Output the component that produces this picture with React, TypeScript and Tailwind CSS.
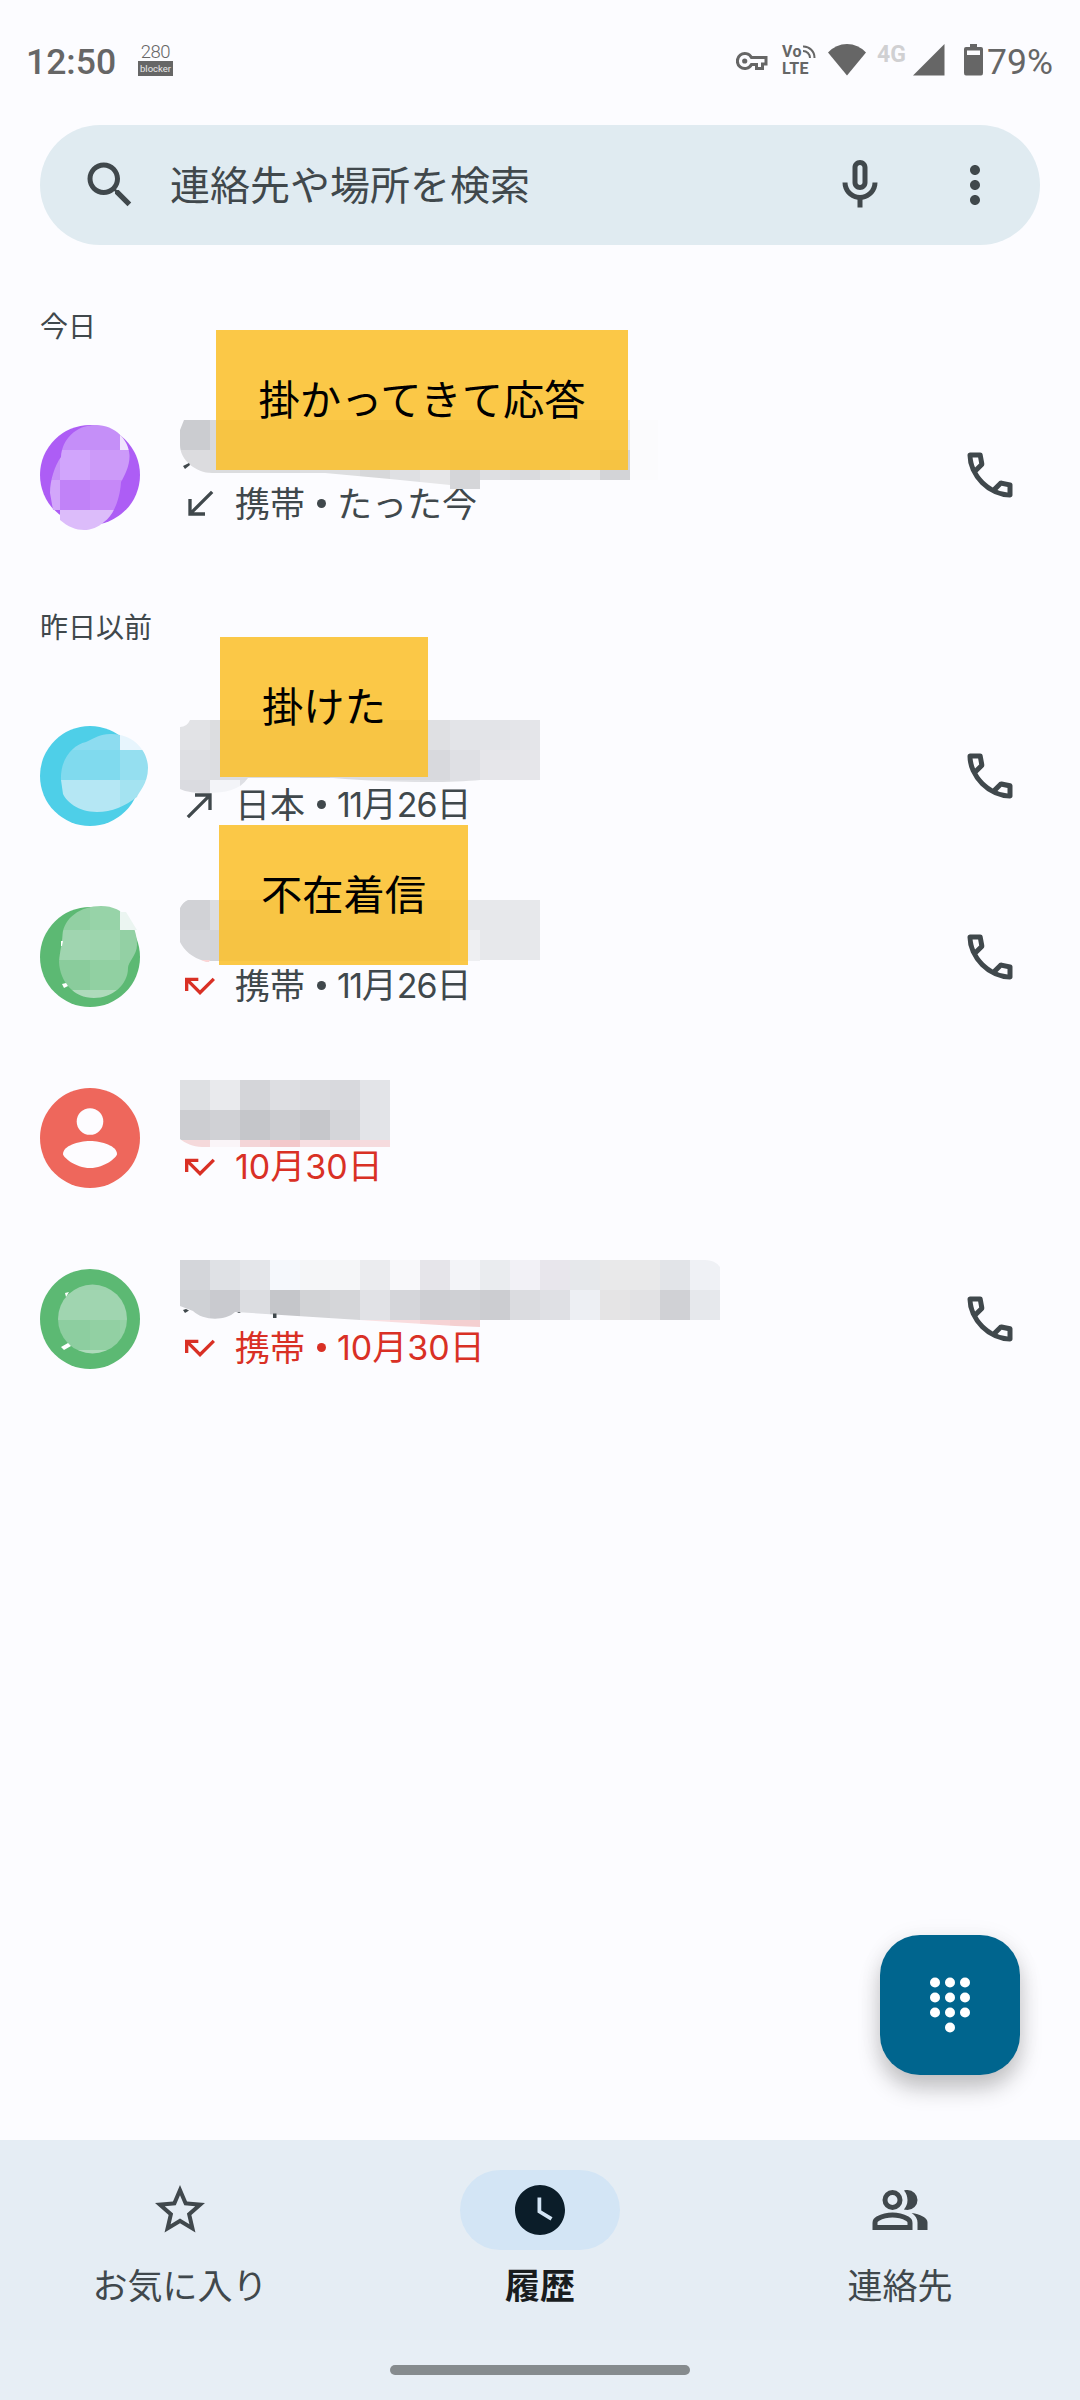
import { ReactNode } from 'react';

type CallType = 'received' | 'made' | 'missed';

interface Block {
  x: number;
  y: number;
  h?: number;
  w?: number;
  colors: string[];
}

interface Mosaic {
  clip: string;
  blocks: Block[];
}

interface Call {
  id: string;
  top: number;
  type: CallType;
  avatar: string;
  unknown?: boolean;
  place?: string;
  date: ReactNode;
  alert?: boolean;
  callable: boolean;
  mosaics: Mosaic[];
  marks?: { d: string; fill: string }[];
  note?: { text: string; box: string };
}

const callPaths: Record<CallType, string> = {
  received: 'M20 5.41L18.59 4 7 15.59V9H5v10h10v-2H8.41z',
  made: 'M9 5v2h6.59L4 18.59 5.41 20 17 8.41V15h2V5z',
  missed: 'M19.59 7L12 14.59 6.41 9H11V7H3v8h2v-4.59l7 7 9-9z',
};

const paths = {
  search:
    'M15.5 14h-.79l-.28-.27C15.41 12.59 16 11.11 16 9.5 16 5.91 13.09 3 9.5 3S3 5.91 3 9.5 5.91 16 9.5 16c1.61 0 3.09-.59 4.23-1.57l.27.28v.79l5 4.99L20.49 19l-4.99-5zm-6 0C7.01 14 5 11.99 5 9.5S7.01 5 9.5 5 14 7.01 14 9.5 11.99 14 9.5 14z',
  mic: 'M12 14c1.66 0 3-1.34 3-3V5c0-1.66-1.34-3-3-3S9 3.34 9 5v6c0 1.66 1.34 3 3 3zm-1-9c0-.55.45-1 1-1s1 .45 1 1v6c0 .55-.45 1-1 1s-1-.45-1-1V5zm6 6c0 2.76-2.24 5-5 5s-5-2.24-5-5H5c0 3.53 2.61 6.43 6 6.92V21h2v-3.08c3.39-.49 6-3.39 6-6.92h-2z',
  more: 'M12 8c1.1 0 2-.9 2-2s-.9-2-2-2-2 .9-2 2 .9 2 2 2zm0 2c-1.1 0-2 .9-2 2s.9 2 2 2 2-.9 2-2-.9-2-2-2zm0 6c-1.1 0-2 .9-2 2s.9 2 2 2 2-.9 2-2-.9-2-2-2z',
  phone:
    'M19.95 21q-3.125 0-6.175-1.362t-5.55-3.863-3.862-5.55T3 4.05q0-.45.3-.75t.75-.3H8.1q.35 0 .625.238t.325.562l.65 3.5q.05.4-.025.675T9.4 8.45L6.975 10.9q.5.925 1.187 1.787t1.513 1.663q.775.775 1.625 1.438T13.1 17l2.35-2.35q.225-.225.588-.338t.712-.062l3.45.7q.35.1.575.363T21 15.9v4.05q0 .45-.3.75t-.75.3M6.025 9l1.65-1.65L7.25 5H5.025q.125 1.025.35 2.025T6.025 9m8.95 8.95q.975.425 1.988.675T19 18.95v-2.2l-2.35-.475z',
  star: 'M22 9.24l-7.19-.62L12 2 9.19 8.63 2 9.24l5.46 4.73L5.82 21 12 17.27 18.18 21l-1.63-7.03L22 9.24zM12 15.4l-3.76 2.27 1-4.28-3.32-2.88 4.38-.38L12 6.1l1.71 4.04 4.38.38-3.32 2.88 1 4.28L12 15.4z',
  clock:
    'M12 2C6.5 2 2 6.5 2 12s4.5 10 10 10 10-4.5 10-10S17.5 2 12 2zm4.2 14.2L11 13V7h1.5v5.2l4.5 2.7-.8 1.3z',
  people:
    'M1 20v-2.8q0-.85.438-1.562T2.6 14.55q1.55-.775 3.15-1.162T9 13t3.25.388 3.15 1.162q.725.375 1.163 1.088T17 17.2V20zm18 0v-3q0-1.1-.612-2.113T16.65 13.15q1.275.15 2.4.513t2.1.887q.9.5 1.375 1.112T23 17v3zM9 12q-1.65 0-2.825-1.175T5 8t1.175-2.825T9 4t2.825 1.175T13 8t-1.175 2.825T9 12m10-4q0 1.65-1.175 2.825T15 12q-.275 0-.7-.062t-.7-.138q.675-.8 1.038-1.775T15 8t-.362-2.025T13.6 4.2q.35-.125.7-.163T15 4q1.65 0 2.825 1.175T19 8M3 18h12v-.8q0-.275-.137-.5t-.363-.35q-1.35-.675-2.725-1.012T9 15t-2.775.338T3.5 16.35q-.225.125-.363.35T3 17.2zm6-8q.825 0 1.413-.587T11 8t-.587-1.412T9 6t-1.412.588T7 8t.588 1.413T9 10',
};

const Icon = ({ d, className = 'size-[60px]' }: { d: string; className?: string }) => (
  <svg viewBox="0 0 24 24" fill="currentColor" className={`shrink-0 ${className}`}>
    <path d={d} />
  </svg>
);

const Num = ({ children, className = '' }: { children: string; className?: string }) => (
  <span className={`font-[Inter,sans-serif] text-[34px] ${className}`}>{children}</span>
);

const nov26 = (
  <>
    <Num className="tracking-[-1.5px]">11</Num>月<Num className="tracking-[-1px]">26</Num>日
  </>
);

const oct30 = (
  <>
    <Num>10</Num>月<Num>30</Num>日
  </>
);

const calls: Call[] = [
  {
    id: 'c1',
    top: 385,
    type: 'received',
    avatar: 'bg-[#ad5df5]',
    place: '携帯',
    date: 'たった今',
    callable: true,
    note: { text: '掛かってきて応答', box: 'left-[216px] top-[-55px] w-[412px]' },
    mosaics: [
      {
        clip: 'M96 425C75 425 62 440 61 457C55 465 50 480 50 493L53 510H60V520C75 533 92 533 104 522C113 516 120 500 121 482C125 475 130 465 129.500 455C129 440 115 425 96 425Z',
        blocks: [
          { x: 30, y: 420, colors: ['#c892f8', '#c58ef9', '#c58ff8', '#f0e4fd'] },
          { x: 30, y: 450, colors: ['#c892f8', '#d1a5fc', '#cc9af9', '#cc9af9'] },
          { x: 30, y: 480, colors: ['#d2a6fa', '#c182f8', '#c688f8', '#c688f8'] },
          { x: 30, y: 510, colors: ['#dcbcfa', '#dcbcfa', '#dcbcfa', '#dcbcfa'] },
        ],
      },
      {
        clip: 'M184 420H658V480H480V489H450V485L390 479L325 473H212C196 473 180 460 180 445V430Z',
        blocks: [
          { x: 180, y: 420, colors: ['#cbccd0', '#d8d9dc', '#dcdde0', '#e0e1e4', '#dedfe2', '#dadbdf', '#d6d7db', '#d6d7db', '#dcdde0', '#e0e1e4', '#e4e5e8', '#e4e5e8', '#e4e5e8', '#e6e7ea', '#e8e9ec', '#fbfbfd'] },
          { x: 180, y: 450, h: 40, colors: ['#dcdcdf', '#dbdcde', '#dddee0', '#dbdcdf', '#dddee1', '#dddee0', '#d7d8da', '#dfe0e3', '#e6e6e8', '#d5d6d9', '#dedfe2', '#dadbde', '#e0e1e3', '#e4e5e7', '#d3d4d7', '#fbfbfd'] },
        ],
      },
    ],
    marks: [{ d: 'M183 466L189 463L190 465L185 469Z', fill: '#40484c' }],
  },
  {
    id: 'c2',
    top: 686,
    type: 'made',
    avatar: 'bg-[#4ecfe8]',
    place: '日本',
    date: nov26,
    callable: true,
    note: { text: '掛けた', box: 'left-[220px] top-[-49px] w-[208px]' },
    mosaics: [
      {
        clip: 'M110 734C132 733 148 750 148 768C148 784 138 793 137 797C125 806 112 812 97 812C78 812 66 801 63 794L61 780C60 760 72 745 86 742C95 738 100 734 110 734Z',
        blocks: [
          { x: 60, y: 720, colors: ['#8ddcf0', '#8ddcf0', '#e7f5fd'] },
          { x: 60, y: 750, colors: ['#80daee', '#80daee', '#95dff0'] },
          { x: 60, y: 780, h: 40, colors: ['#b5e7f4', '#b5e7f4', '#a4e3f1'] },
        ],
      },
      {
        clip: 'M190 720H540V780H480C450 783 390 783 333 778H248C240 790 225 793 208 793C195 793 186 792 180 789V727Q187 727 190 720Z',
        blocks: [
          { x: 180, y: 720, colors: ['#e2e3e6', '#dcdde0', '#e0e1e4', '#dedfe2', '#dcdde0', '#dedfe2', '#e0e1e4', '#dddee1', '#dfe0e3', '#e3e4e8', '#e3e4e8', '#e4e5e9'] },
          { x: 180, y: 750, colors: ['#dedfe3', '#dcdde1', '#dbdce0', '#dcdde0', '#d4d5d9', '#dadbdf', '#dcdde0', '#d8d9dd', '#d8d9dd', '#dfe0e4', '#e6e6ea', '#e6e6ea'] },
          { x: 180, y: 780, colors: ['#dadbe0', '#f3f4f8', '#dfe0e5', '#fcfcff', '#e4e5e9', '#e4e5e9', '#e0e1e5', '#e0e1e5', '#dcdde1', '#dfe0e4'] },
        ],
      },
    ],
  },
  {
    id: 'c3',
    top: 867,
    type: 'missed',
    avatar: 'bg-[#5cb973]',
    place: '携帯',
    date: nov26,
    callable: true,
    note: { text: '不在着信', box: 'left-[219px] top-[-42px] w-[249px]' },
    mosaics: [
      {
        clip: 'M101 906C125 906 137 925 137 945C137 955 128 962 128 968C128 985 112 998 94 998C74 998 60 982 59 962C60 950 62 945 62.500 935C64 918 80 906 101 906Z',
        blocks: [
          { x: 30, y: 900, colors: ['#92d0a3', '#92d0a3', '#97d3a8', '#ebf5f1'] },
          { x: 30, y: 930, colors: ['#a0d5b0', '#a0d5b0', '#9dd5ad', '#93d0a4'] },
          { x: 30, y: 960, colors: ['#8acc9c', '#8acc9c', '#91d0a2', '#91d0a2'] },
          { x: 30, y: 990, colors: ['#aedbbb', '#aedbbb', '#aedbbb', '#aedbbb'] },
        ],
      },
      { clip: 'M120 912H126L137 930H120Z', blocks: [{ x: 120, y: 900, colors: ['#ebf5f1'] }] },
      {
        clip: 'M188 900H540V960H480V961H205C192 958 184 950 180 942V908Q183 902 188 900Z',
        blocks: [
          { x: 180, y: 900, colors: ['#d1d2d6', '#dcdde0', '#dedfe2', '#e0e1e4', '#e0e1e4', '#dedfe2', '#dedfe2', '#e0e1e4', '#e0e1e4', '#e7e8eb', '#e7e8eb', '#e7e8eb'] },
          { x: 180, y: 930, h: 31, colors: ['#d5d6da', '#d3d4d8', '#d6d7db', '#d8d9dd', '#d8d9dd', '#d8d9dd', '#d6d7db', '#d4d5d9', '#d8d9dd', '#eeeff2', '#e7e8eb', '#e7e8eb'] },
        ],
      },
    ],
    marks: [
      { d: 'M61 941H63L62 946H61Z', fill: '#fff' },
      { d: 'M62 984L66 983L68 986L64 988Z', fill: '#fff' },
      { d: 'M201 960H210L209 962H206Z', fill: '#fbd5d6' },
    ],
  },
  {
    id: 'c4',
    top: 1048,
    type: 'missed',
    avatar: 'bg-[#ee675c]',
    unknown: true,
    date: oct30,
    alert: true,
    callable: false,
    mosaics: [
      {
        clip: 'M180 1080H390V1147H202C193 1147 185 1143 180 1139Z',
        blocks: [
          { x: 180, y: 1080, colors: ['#dee0e3', '#e9eaed', '#d4d5d9', '#dddee2', '#dadbdf', '#d8d9dd', '#e3e4e8'] },
          { x: 180, y: 1110, colors: ['#cccdd1', '#d0d1d5', '#c5c6ca', '#cccdd1', '#c6c7cb', '#d4d5d9', '#e3e4e8'] },
          { x: 180, y: 1140, colors: ['#f5d9db', '#faf5f8', '#f4d5d8', '#f3c8cb', '#f7dfe2', '#f6d8db', '#f6dbde'] },
        ],
      },
    ],
  },
  {
    id: 'c5',
    top: 1229,
    type: 'missed',
    avatar: 'bg-[#5cb973]',
    place: '携帯',
    date: oct30,
    alert: true,
    callable: true,
    mosaics: [
      {
        clip: 'M92.500 1284.500a34.500 34.500 0 1 1 0 69a34.500 34.500 0 1 1 0-69Z',
        blocks: [
          { x: 30, y: 1260, colors: ['#9dd3ad', '#9dd3ad', '#9dd3ad', '#9dd3ad'] },
          { x: 30, y: 1290, colors: ['#a0d5b0', '#a0d5b0', '#a0d5b0', '#a0d5b0'] },
          { x: 30, y: 1320, colors: ['#8dcea0', '#8dcea0', '#92d0a3', '#96d2a7'] },
          { x: 30, y: 1350, colors: ['#aedbbb', '#aedbbb', '#aedbbb', '#aedbbb'] },
        ],
      },
      {
        clip: 'M180 1260H705Q715 1260 720 1267V1320H480V1327L455 1326L360 1320L235 1312C226 1321 203 1321 193 1311L180 1306Z',
        blocks: [
          { x: 180, y: 1260, colors: ['#d4d6da', '#dfe1e5', '#e4e6ea', '#f5f8fc', '#f5f6f8', '#f5f6f8', '#ebecef', '#f8f8fa', '#e6e5ea', '#f3f4f8', '#eaecef', '#f2f1f6', '#e8e6ec', '#e6e8eb', '#e9e9ea', '#e9e9ea', '#e2e4e8', '#eff1f5'] },
          { x: 180, y: 1290, colors: ['#cfd1d5', '#c9cacf', '#dcdde1', '#c5c6ca', '#d2d3d6', '#d5d6d9', '#e1e2e6', '#d5d6da', '#cecfd3', '#cfd0d4', '#cccdd1', '#dbdce0', '#dfe0e4', '#edeff3', '#e5e4e5', '#e2e2e4', '#d0d1d5', '#e6e8ec'] },
          { x: 360, y: 1320, colors: ['#f9e0e2', '#f9dcde', '#f6d3d5', '#f4cfd0'] },
        ],
      },
    ],
    marks: [
      { d: 'M65 1293L69 1292L66 1297Z', fill: '#fff' },
      { d: 'M61 1347L68 1343L71 1346L64 1350Z', fill: '#fff' },
      { d: 'M183 1310L186 1309L189 1310.500L185 1313Z', fill: '#40484c' },
      { d: 'M273 1313.500H276.500V1318H273Z', fill: '#40484c' },
      { d: 'M237 1312H241L239 1313Z', fill: '#40484c' },
    ],
  },
];

// Pixelated cover over the name and picture of a contact
const MosaicLayer = ({ call }: { call: Call }) => (
  <svg
    className="absolute inset-0 pointer-events-none"
    width="1080"
    height="181"
    viewBox={`0 ${call.top} 1080 181`}
  >
    {call.mosaics.map((m, i) => (
      <g key={i}>
        <clipPath id={`${call.id}-${i}`}>
          <path d={m.clip} />
        </clipPath>
        <g clipPath={`url(#${call.id}-${i})`} shapeRendering="crispEdges">
          {m.blocks.map((b) =>
            b.colors.map((c, n) => (
              <rect key={`${b.y}-${n}`} x={b.x + n * 30} y={b.y} width={b.w ?? 30} height={b.h ?? 30} fill={c} />
            ))
          )}
        </g>
      </g>
    ))}
    {call.marks?.map((m) => (
      <path key={m.d} d={m.d} fill={m.fill} />
    ))}
  </svg>
);

const CallRow = ({ call }: { call: Call }) => (
  <div className="relative flex h-[181px] items-start pt-10 pl-10 pr-[60px]">
    <div className={`size-[100px] shrink-0 rounded-full ${call.avatar}`}>
      {call.unknown && (
        <svg viewBox="0 0 100 100" fill="#fdfcff">
          <circle cx="50" cy="33.5" r="13.300" />
          <path d="M23 66C23 58 38 53 50 53S77 58 77 66C77 69 65 80 50 80S23 69 23 66Z" />
        </svg>
      )}
    </div>
    <div className="ml-10 flex h-[100px] flex-1 flex-col justify-end">
      <div className={`flex h-[42px] items-center ${call.alert ? 'text-[#d93025]' : 'text-[#40484c]'}`}>
        <Icon
          d={callPaths[call.type]}
          className={`size-10 ${call.type === 'missed' ? 'text-[#d93025]' : ''}`}
        />
        <span className="ml-[15px] flex items-center whitespace-nowrap pb-1 text-[35px] leading-[42px]">
          {call.place}
          {call.place && <span className="mt-[3px] mr-[11px] ml-3 size-[9px] rounded-full bg-current" />}
          <span>{call.date}</span>
        </span>
      </div>
    </div>
    {call.callable && (
      <button className="mt-5 text-[#40484c]">
        <Icon d={paths.phone} />
      </button>
    )}
    <MosaicLayer call={call} />
    {call.note && (
      <div
        className={`absolute z-10 flex h-[140px] items-center justify-center whitespace-nowrap bg-[#fbc02d]/88 pb-1 text-[41.3px] text-black ${call.note.box}`}
      >
        {call.note.text}
      </div>
    )}
  </div>
);

const StatusBar = () => (
  <div className="flex h-[125px] items-start justify-between pt-10 pl-[26px] pr-[27px] font-[Roboto,sans-serif] text-[#666]">
    <div className="flex h-10 items-center">
      <span className="w-[112px] pt-1 text-[35.5px] leading-10 font-medium">12:50</span>
      <div className="flex w-[35px] flex-col items-center">
        <span className="text-[18.5px] leading-[17px] tracking-[-0.5px] font-light">280</span>
        <span className="flex h-[15px] w-full items-center justify-center bg-[#666] text-[9.5px] leading-none text-[#e8e8e8]">
          blocker
        </span>
      </div>
    </div>
    <div className="flex h-10 items-center">
      <svg width="32" height="20" viewBox="0 0 32 20" fill="none" stroke="#666" strokeWidth="3" className="mt-[2px]">
        <path d="M15.500 6.500A7.500 7.500 0 1 0 15.500 13.500H20.500V17.500H26.500V13H30V6.500Z" />
        <circle cx="8.700" cy="10" r="2.600" fill="#666" stroke="none" />
      </svg>
      <div className="relative ml-[14px] w-[36px] text-[16px] leading-[17.5px] font-bold tracking-[0.3px]">
        <div>Vo</div>
        <div>LTE</div>
        <svg width="14" height="14" viewBox="0 0 14 14" fill="none" stroke="#666" strokeWidth="2" className="absolute left-[20px] top-[2px]">
          <path d="M1 1.500A11 11 0 0 1 12.500 13M1 6A7 7 0 0 1 8 13" />
        </svg>
      </div>
      <svg width="38" height="32" viewBox="0 0 38 32" fill="#666" className="ml-[10px]">
        <path d="M0 8.500Q8 0 19 0T38 8.500L19 31.500Z" />
      </svg>
      <span className="ml-[11px] mb-[12px] w-[29px] text-[23px] leading-none font-bold text-[#d0d0d2]">4G</span>
      <svg width="32" height="32" viewBox="0 0 32 32" fill="#666" className="ml-[7px]">
        <path d="M31.500 0V31.500H0Z" />
      </svg>
      <svg width="19" height="32" viewBox="0 0 19 32" fill="#666" className="ml-[19px]">
        <path fillRule="evenodd" d="M6 0H13V3H17Q19 3 19 5V29Q19 31.500 17 31.500H2Q0 31.500 0 29V5Q0 3 2 3H6ZM3 6.500V11H16V6.500Z" />
      </svg>
      <span className="ml-1 pt-[3px] text-[35.5px] leading-10">79%</span>
    </div>
  </div>
);

const SearchBar = () => (
  <div className="mx-10 flex h-[120px] items-center rounded-full bg-[#e0ebf1] pl-10 pr-[35px] text-[#40484c]">
    <Icon d={paths.search} />
    <span className="ml-[30px] flex-1 pb-1 text-[40px] leading-[60px]">連絡先や場所を検索</span>
    <Icon d={paths.mic} />
    <Icon d={paths.more} className="ml-[55px] size-[60px]" />
  </div>
);

const SectionTitle = ({ children, className }: { children: ReactNode; className: string }) => (
  <h2 className={`flex items-end pb-[39px] pl-10 text-[28px] leading-[42px] text-[#40484c] ${className}`}>
    {children}
  </h2>
);

const tabs = [
  { label: 'お気に入り', icon: paths.star, active: false },
  { label: '履歴', icon: paths.clock, active: true },
  { label: '連絡先', icon: paths.people, active: false },
];

const BottomNav = () => (
  <nav className="h-[260px] bg-[#e5edf4]">
    <div className="grid h-[200px] grid-cols-3">
      {tabs.map((tab) => (
        <button
          key={tab.label}
          className={`flex flex-col items-center pt-[30px] ${tab.active ? 'text-[#191c1e]' : 'text-[#40484c]'}`}
        >
          <span
            className={`flex h-20 w-40 items-center justify-center rounded-full ${
              tab.active ? 'bg-[#d3e5f5] text-[#0b1d29]' : ''
            }`}
          >
            <Icon d={tab.icon} />
          </span>
          <span className={`mt-2 text-[35px] leading-[52px] ${tab.active ? 'font-bold' : ''}`}>{tab.label}</span>
        </button>
      ))}
    </div>
    <div className="flex h-[60px] justify-center bg-[#e7eef5] pt-[25px]">
      <div className="h-[10px] w-[300px] rounded-full bg-[#868b8e]" />
    </div>
  </nav>
);

const App = () => {
  return (
    <div className="relative flex h-[2400px] w-[1080px] flex-col overflow-hidden bg-[#fcfcff] font-['Noto_Sans_CJK_JP',sans-serif]">
      <StatusBar />
      <SearchBar />

      <main className="flex-1">
        <SectionTitle className="h-[140px]">今日</SectionTitle>
        <CallRow call={calls[0]} />
        <SectionTitle className="h-[120px]">昨日以前</SectionTitle>
        {calls.slice(1).map((call) => (
          <CallRow key={call.id} call={call} />
        ))}
      </main>

      {/* Dial pad */}
      <button className="absolute right-[60px] bottom-[325px] flex size-[140px] items-center justify-center rounded-[40px] bg-[#00658e] shadow-[0_14px_22px_rgba(0,0,0,0.22),0_2px_24px_rgba(0,0,0,0.06)]">
        <svg width="60" height="60" viewBox="0 0 60 60" fill="#fff">
          {[7.5, 22.5, 37.5].map((y) =>
            [15, 30, 45].map((x) => <circle key={`${x}-${y}`} cx={x} cy={y} r="5" />)
          )}
          <circle cx="30" cy="52.500" r="5" />
        </svg>
      </button>

      <BottomNav />
    </div>
  );
};

export default App;
